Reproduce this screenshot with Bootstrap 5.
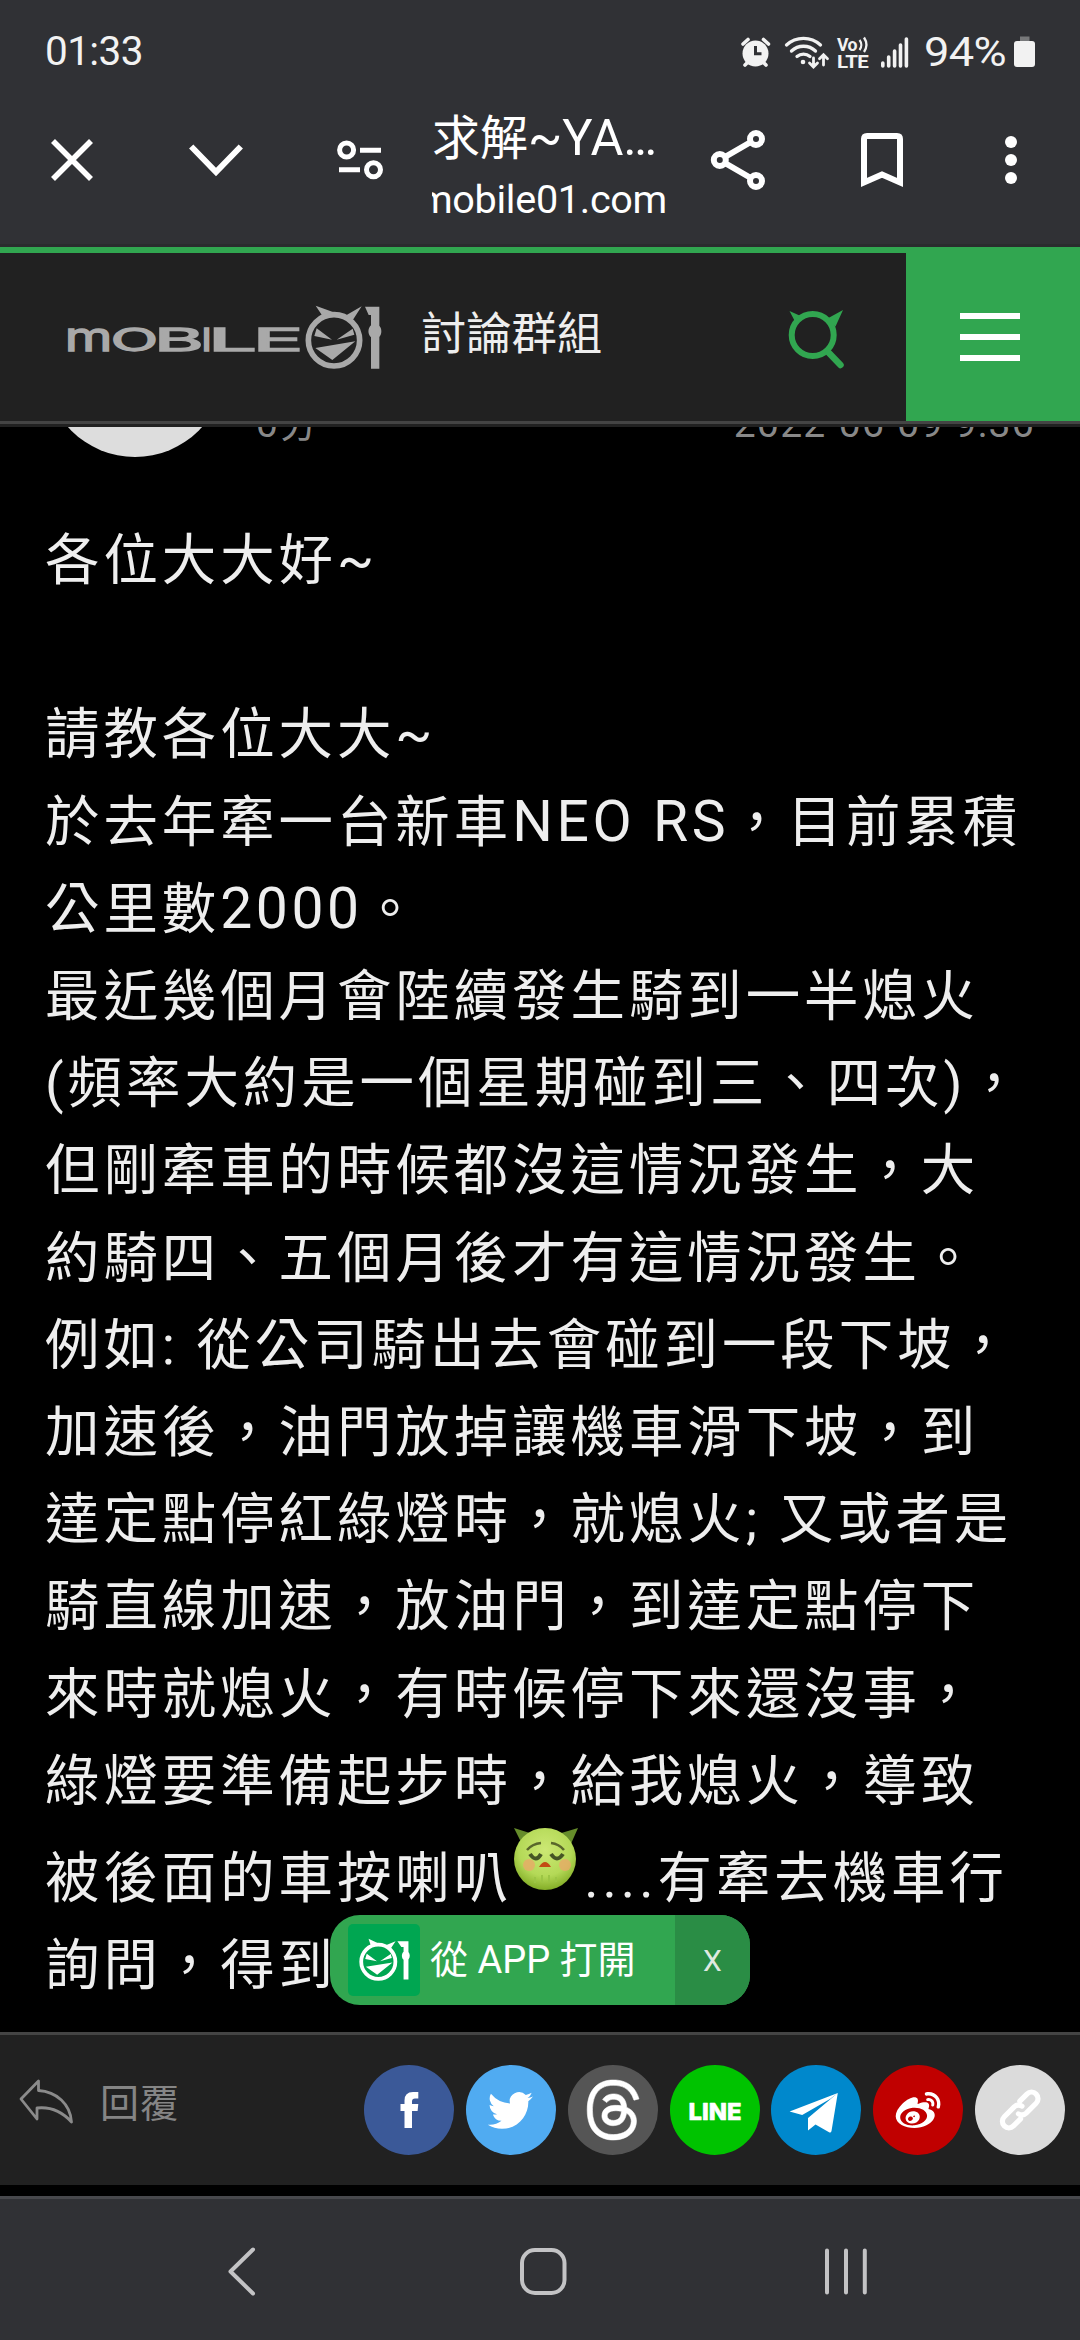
<!DOCTYPE html>
<html lang="zh-Hant">
<head>
<meta charset="utf-8">
<meta name="viewport" content="width=device-width, initial-scale=1">
<title>Mobile01</title>
<link rel="stylesheet" href="https://cdn.jsdelivr.net/npm/bootstrap@5.3.0/dist/css/bootstrap.min.css">
<style>
  body { background:#000; color:#eee; font-family:Roboto,"Noto Sans CJK TC",sans-serif; width:1080px; height:2340px; overflow:hidden; }
  svg { display:block; flex:none; overflow:visible; }
  .browser-top { height:244px; background:#303135; color:#fff; }
  .browser-edge { height:3px; background:#2a2c2e; }
  .status { height:100px; padding:3px 45px 0; color:#f2f2f2; font-size:40.5px; letter-spacing:-.6px; }
  .toolbar-row { height:120px; padding-left:48px; }
  .tab-title { width:234px; margin:16px 0 0 49px; }
  .tab-name { font-size:48px; line-height:62px; }
  .tab-name span { font-size:50.5px; }
  .tab-host { font-size:39.6px; line-height:60px; letter-spacing:-.3px; }
  .tab-host span { margin-right:-1px; }
  .site-head { height:177px; background:#212121; border-top:6px solid #31a650; border-bottom:3px solid #444; }
  .site-edge { height:3px; background:#212121; }
  .wordmark { margin-left:50px; }
  .wordmark .face-ring { fill:none; stroke:#a9a9a9; stroke-width:17; }
  .board { font-size:45.3px; margin-left:31px; margin-top:-4px; }
  .menu-btn { width:174px; background:#31a650; border:0; border-radius:0; }
  .bars { gap:15px; margin-right:6px; }
  .bars i { display:block; width:60px; height:6px; background:#fff; }
  .meta { height:90px; color:#888; font-size:39px; }
  .avatar { width:180px; height:180px; border-radius:50%; background:#ddd; margin:-150px 0 0 45px; flex:none; }
  .meta-txt { line-height:40px; margin-top:-23px; letter-spacing:1.3px; }
  .post { font-size:54.4px; line-height:87.2px; letter-spacing:4px; padding-left:45px; white-space:nowrap; }
  .latin { font-size:57px; letter-spacing:3.6px; line-height:1; }
  .post svg { display:inline-block; vertical-align:baseline; }
  .app-pill { left:330px; top:1915px; width:420px; height:90px; border-radius:30px; background:#31a650; color:#fff; font-size:38px; z-index:3; }
  .app-logo { width:72px; height:72px; border-radius:5px; background:#00a651; margin-left:18px; }
  .pill-x { width:75px; background:#2a8d45; color:#dfe9e1; font-size:30px; }
  .actions { height:153px; background:#212121; border-top:3px solid #444; padding-right:15px; }
  .reply { color:#858585; font-size:39px; letter-spacing:1px; margin-top:-12px; }
  .disc { width:90px; height:90px; border-radius:50%; flex:none; }
  .sys-nav { height:144px; background:#303135; border-top:3px solid #47484c; margin-top:11px; }
</style>
<script src="https://cdn.jsdelivr.net/npm/bootstrap@5.3.0/dist/js/bootstrap.bundle.min.js"></script>
</head>
<body class="d-flex flex-column position-relative m-0">

<header class="browser-top">
  <div class="status d-flex align-items-center">
    <span>01:33</span>
    <svg class="ms-auto" width="294" height="34" viewBox="741 34 294 34" fill="none" stroke="#f2f2f2">
      <g stroke-width="3.6" stroke-linecap="round">
        <circle cx="755.5" cy="52.5" r="13" fill="#f2f2f2" stroke="none"/>
        <path d="M743 43l5-4.5M768.500 43l-5-4.500M748 61l-3 3M763 61l3 3"/>
        <path d="M755.500 45v7.800h6" stroke="#303135" stroke-width="3" stroke-linecap="butt"/>
        <path d="M786.500 44a25 25 0 0 1 34 0M791.500 50a17.500 17.500 0 0 1 24 0M797 55.500a10 10 0 0 1 13 0" stroke-width="3.300"/>
        <circle cx="803" cy="61" r="2.300" fill="#f2f2f2" stroke="none"/>
        <path d="M813.500 57v8.500m-4-3.500l4 4 4-4M823.500 64v-10m-4 3.800l4-4 4 4" stroke-width="2.800"/>
      </g>
      <g stroke="none" fill="#f2f2f2" font-family="Roboto" font-weight="700">
        <text x="837" y="49.500" font-size="18.500" textLength="20" lengthAdjust="spacingAndGlyphs">Vo</text>
        <text x="837" y="66.500" font-size="18.500" textLength="31" lengthAdjust="spacingAndGlyphs">LTE</text>
      </g>
      <path d="M859.500 39a8 8 0 0 1 0 10M864 36.500a13 13 0 0 1 0 14.500" stroke-width="2.300"/>
      <path d="M882.800 62v3M888.700 56v9M894.600 50v15M900.500 44v21M906.400 38v27" stroke-width="3.600" stroke-linecap="round"/>
      <text x="924" y="65.300" font-size="41" font-family="Roboto" fill="#f2f2f2" stroke="none" textLength="82" lengthAdjust="spacingAndGlyphs">94%</text>
      <path d="M1020 35.500h9.500v5h-9.500z" fill="#77787a" stroke="none"/>
      <rect x="1014" y="40" width="21" height="26" rx="3" fill="#f2f2f2" stroke="none"/>
    </svg>
  </div>
  <div class="toolbar-row d-flex align-items-center" aria-label="瀏覽器工具列">
    <svg width="48" height="48" viewBox="48 136 48 48" fill="none" stroke="#fff" stroke-width="5.600"><path d="M53 141l38 38M91 141l-38 38"/></svg>
    <svg style="margin-left:93px" width="54" height="48" viewBox="189 136 54 48" fill="none" stroke="#fff" stroke-width="6"><path d="M191.200 146.500L216 172l24.800-25.500"/></svg>
    <svg style="margin-left:94px" width="46" height="40" viewBox="337 140 46 40" fill="none" stroke="#fff" stroke-width="5"><circle cx="346.600" cy="150" r="7"/><circle cx="373.500" cy="169.700" r="7"/><path d="M360 150.200h21M339 169.700h21"/></svg>
    <div class="tab-title d-flex flex-column overflow-hidden text-nowrap">
      <div class="tab-name">求解<span>~YA…</span></div>
      <div class="tab-host d-flex justify-content-end"><span>mobile01.com</span></div>
    </div>
    <svg style="margin-left:45px" width="54" height="60" viewBox="711 130 54 60" fill="none" stroke="#fff" stroke-width="6"><path d="M756 139l-36.200 21 36.200 21"/><g fill="#303135"><circle cx="756" cy="139" r="6"/><circle cx="719.800" cy="160" r="6"/><circle cx="756" cy="181" r="6"/></g></svg>
    <svg style="margin-left:96px" width="42" height="54" viewBox="861 133 42 54" fill="none" stroke="#fff" stroke-width="6"><path d="M864 182.500V139q0-3 3-3h30q3 0 3 3v43.500l-18-8z"/></svg>
    <svg style="margin-left:102px" width="12" height="48" viewBox="1005 136 12 48" fill="#fff"><circle cx="1011" cy="142" r="6"/><circle cx="1011" cy="160" r="6"/><circle cx="1011" cy="178" r="6"/></svg>
  </div>
</header>
<div class="browser-edge"></div>

<nav class="site-head d-flex align-items-center">
  <svg class="wordmark" width="340" height="90" viewBox="0 -3 1020 270" fill="#a9a9a9">
    <g font-family="Inter" stroke="#a9a9a9" stroke-width="4" font-size="92">
      <text x="44" y="175" font-size="119" textLength="143" lengthAdjust="spacingAndGlyphs">m</text>
      <text x="182" y="175" textLength="142" lengthAdjust="spacingAndGlyphs">O</text>
      <text x="313" y="175" textLength="148" lengthAdjust="spacingAndGlyphs">B</text>
      <text x="454" y="175" textLength="32" lengthAdjust="spacingAndGlyphs">I</text>
      <text x="474" y="175" textLength="147" lengthAdjust="spacingAndGlyphs">L</text>
      <text x="608" y="175" textLength="152" lengthAdjust="spacingAndGlyphs">E</text>
    </g>
    <circle class="face-ring" cx="852" cy="142" r="77"/>
    <path d="M797 38l54 20-32 13zM935 40l-49 28 20 17z"/>
    <path d="M800 106l46 34-53-11zM908 107l-48 33 53-15zM796 165l120-20-69 56z"/>
    <path d="M945 41h43v57c8 9 8 25 0 34v95h-25v-94c-10-9-10-27 0-36V66h-7z"/>
  </svg>
  <div class="board text-nowrap">討論群組</div>
  <svg class="ms-auto" style="margin-right:56px" width="70" height="70" viewBox="0 1 70 70" fill="#31a650"><circle cx="32.700" cy="34" r="21" fill="none" stroke="#31a650" stroke-width="6"/><path d="M9.500 10l10 4.500-4.500 6zM63 9L47.500 17.500l8 8z"/><path d="M49 52l11.500 12" stroke="#31a650" stroke-width="6.500" stroke-linecap="round"/></svg>
  <button class="menu-btn btn p-0 align-self-stretch d-flex align-items-center justify-content-center" aria-label="選單"><span class="bars d-flex flex-column"><i></i><i></i><i></i></span></button>
</nav>
<div class="site-edge"></div>

<main class="flex-grow-1 overflow-hidden">
  <div class="meta d-flex overflow-hidden">
    <div class="avatar"></div>
    <div class="meta-txt" style="margin-left:31px">0分</div>
    <div class="meta-txt ms-auto" style="margin-right:45px">2022-06-09 9:36</div>
  </div>
  <div class="post">各位大大好~<br><br>請教各位大大~<br>於去年牽一台新車<span class="latin">NEO RS</span>，目前累積<br>公里數<span class="latin">2000</span>。<br>最近幾個月會陸續發生騎到一半熄火<br>(頻率大約是一個星期碰到三、四次)，<br>但剛牽車的時候都沒這情況發生，大<br>約騎四、五個月後才有這情況發生。<br>例如: 從公司騎出去會碰到一段下坡，<br>加速後，油門放掉讓機車滑下坡，到<br>達定點停紅綠燈時，就熄火; 又或者是<br>騎直線加速，放油門，到達定點停下<br>來時就熄火，有時候停下來還沒事，<br>綠燈要準備起步時，給我熄火，導致<br>被後面的車按喇叭<svg width="72" height="72" viewBox="0 0 72 72"><defs><radialGradient id="skin" cx=".5" cy=".35" r=".65"><stop offset="0" stop-color="#cce874"/><stop offset=".65" stop-color="#b4d957"/><stop offset="1" stop-color="#83ad27"/></radialGradient></defs><path d="M2 3l22 7-13 11zM66 3L46 9l12 12z" fill="#668d2b"/><circle cx="33" cy="34" r="31" fill="url(#skin)"/><circle cx="17" cy="40" r="6" fill="#e9aa68" opacity=".8"/><circle cx="53" cy="40" r="6" fill="#e9aa68" opacity=".8"/><path d="M15 25q5-6 14-7M52 25q-5-6-13-7" fill="none" stroke="#59672b" stroke-width="2.500"/><path d="M18 29q6 9 11 0M39 29q6 9 12 0" fill="none" stroke="#455525" stroke-width="4"/><path d="M27 42q6-10 12 0z" fill="#c34b13"/><path d="M23 52v6M30 50v7M37 50v7M44 52v5" stroke="#9cc544" stroke-width="2"/></svg>....有牽去機車行<br>詢問，得到</div>
</main>

<div class="app-pill position-absolute d-flex align-items-center overflow-hidden">
  <div class="app-logo d-flex align-items-center justify-content-center">
    <svg width="51" height="44" viewBox="765 38 230 192" fill="#fff"><circle cx="852" cy="142" r="77" fill="none" stroke="#fff" stroke-width="17"/><path d="M808 38l43 20-32 13zM930 50l-44 18 20 17z"/><path d="M800 106l46 34-53-11zM908 107l-48 33 53-15zM796 165l120-20-69 56z"/><path d="M938 50h50v48c8 9 8 25 0 34v90h-22v-89c-10-9-10-27 0-36V75h-10z"/></svg>
  </div>
  <div class="text-nowrap" style="margin-left:10px">從 APP 打開</div>
  <div class="pill-x ms-auto align-self-stretch d-flex align-items-center justify-content-center">X</div>
</div>

<footer>
  <div class="actions d-flex align-items-center">
    <svg style="margin:-16px 0 0 19px" width="55" height="46" viewBox="19 2081 55 46" fill="none" stroke="#8b8b8b" stroke-width="2.800" stroke-linejoin="round"><path d="M21 2101l17.500-18v9.500c18 1 32 14 33 31.500-9-10-21-15.500-34.500-14v11z"/></svg>
    <div class="reply" style="margin-left:26px">回覆</div>
    <div class="d-flex ms-auto" style="gap:11.800px">
      <svg class="disc" viewBox="0 0 90 90" style="background:#3b5998" fill="#fff"><path d="M40.500 63V46h-4v-7h4v-3.500q0-8.500 8.500-8.500h5.300v6.600H51q-3 0-3 3V39h6.300l-.7 7H48v17z"/></svg>
      <svg class="disc" viewBox="0 0 90 90" style="background:#50abf1" fill="#fff"><path transform="translate(21.800 21.500) scale(2.820)" d="M5.026 15c6.038 0 9.341-5.003 9.341-9.334q.002-.211-.006-.422A6.700 6.700 0 0 0 16 3.542a6.700 6.700 0 0 1-1.889.518 3.300 3.300 0 0 0 1.447-1.817 6.500 6.500 0 0 1-2.087.793A3.286 3.286 0 0 0 7.875 6.030a9.320 9.320 0 0 1-6.767-3.429 3.290 3.290 0 0 0 1.018 4.382A3.300 3.300 0 0 1 .64 6.575v.045a3.290 3.290 0 0 0 2.632 3.218 3.200 3.200 0 0 1-.865.115 3 3 0 0 1-.614-.057 3.280 3.280 0 0 0 3.067 2.277A6.600 6.600 0 0 1 .78 13.580a6 6 0 0 1-.78-.045A9.340 9.340 0 0 0 5.026 15"/></svg>
      <svg class="disc" viewBox="0 0 90 90" style="background:#555" fill="#fff"><path transform="translate(15.500 15) scale(3.700 3.750)" stroke="#fff" stroke-width=".15" d="M6.321 6.016c-.27-.18-1.166-.802-1.166-.802.756-1.081 1.753-1.502 3.132-1.502.975 0 1.803.327 2.394.948s.928 1.509 1.005 2.644q.492.207.905.484c1.109.745 1.719 1.860 1.719 3.137 0 2.716-2.226 5.075-6.256 5.075C4.594 16 1 13.987 1 7.994 1 2.034 4.482 0 8.044 0 9.690 0 13.550.243 15 5.036l-1.360.353C12.516 1.974 10.163 1.430 8.006 1.430c-3.565 0-5.582 2.171-5.582 6.790 0 4.143 2.254 6.343 5.630 6.343 2.777 0 4.847-1.443 4.847-3.556 0-1.438-1.208-2.127-1.270-2.127-.236 1.234-.868 3.310-3.644 3.310-1.618 0-3.013-1.118-3.013-2.582 0-2.090 1.984-2.847 3.550-2.847.586 0 1.294.04 1.663.114 0-.637-.54-1.728-1.900-1.728-1.250 0-1.566.405-1.967.868ZM8.716 8.190c-2.040 0-2.304.87-2.304 1.416 0 .878 1.043 1.168 1.600 1.168 1.020 0 2.067-.282 2.232-2.423a6.200 6.200 0 0 0-1.528-.161"/></svg>
      <svg class="disc" viewBox="0 0 90 90" style="background:#00c300" fill="#fff"><text x="18.500" y="54.500" font-family="Inter" font-weight="800" font-size="23" textLength="53" lengthAdjust="spacingAndGlyphs" stroke="#fff" stroke-width=".6" stroke-linejoin="round">LINE</text></svg>
      <svg class="disc" viewBox="0 0 90 90" style="background:#0088cc" fill="#fff"><path d="M66.800 28L18.600 46.500l12.600 3.600L59 34zM66.800 28L37 53v12.500l7.500-6L58.500 67.500q1.500.5 2-1.500z"/></svg>
      <svg class="disc" viewBox="0 0 90 90" style="background:#c00000" fill="#fff"><path transform="translate(22.700 24.300) scale(.0875 .0865)" d="M407 177.600c7.600-24-13.400-46.800-37.400-41.700-22 4.800-28.800-28.100-7.100-32.800 50.100-10.900 92.300 37.100 76.500 84.800-6.800 21.200-38.800 10.800-32-10.300zM214.800 446.700C108.500 446.700 0 395.300 0 310.400c0-44.300 28-95.400 76.300-143.700C176 67 279.500 65.800 249.900 161c-4 13.100 12.300 5.700 12.300 6 79.500-33.600 140.500-16.800 114 51.400-3.700 9.400 1.100 10.900 8.300 13.100 135.700 42.300 34.800 215.200-169.700 215.200zm143.700-146.300c-5.400-55.700-78.500-94-163.400-85.700-84.800 8.600-148.800 60.300-143.400 116s78.500 94 163.400 85.700c84.800-8.600 148.800-60.300 143.400-116zM347.900 35.100c-25.900 5.600-16.800 43.700 8.300 38.300 72.300-15.200 134.800 52.800 111.700 124-7.400 24.200 29.100 37 37.400 12 31.900-99.800-55.100-195.900-157.400-174.300zm-78.500 311c-17.100 38.800-66.800 60-109.100 46.300-40.800-13.100-58-53.400-40.300-89.700 17.700-35.400 63.100-55.400 103.400-45.100 42 10.800 63.100 50.200 46 88.500zm-86.300-30c-12.900-5.400-30 .3-38 12.900-8.300 12.900-4.300 28 8.600 34 13.100 6 30.800.3 39.100-12.900 8-13.100 3.700-28.300-9.700-34zm32.600-13.400c-5.100-1.700-11.400.6-14.300 5.400-2.900 5.100-1.400 10.600 3.700 12.900 5.100 2 11.700-.3 14.600-5.400 2.800-5.200 1.100-10.900-4-12.900z"/></svg>
      <svg class="disc" viewBox="0 0 90 90" style="background:#dbdbdb" fill="none" stroke="#fff" stroke-width="5.200" stroke-linecap="round"><g transform="translate(45.200 45) rotate(-45)"><path d="M6-6.500H16a6.500 6.500 0 0 1 0 13H2a6.500 6.500 0 0 1-6-5"/><path d="M-6 6.500H-16a6.500 6.500 0 0 1 0-13H-2a6.500 6.500 0 0 1 6 5"/></g></svg>
    </div>
  </div>
  <div class="sys-nav d-flex align-items-center">
    <svg width="1080" height="60" viewBox="0 2239.500 1080 60" fill="none" stroke="#c3c3c5" stroke-width="4" stroke-linecap="round"><path d="M253 2249l-22.500 22 22.500 22" stroke-linejoin="round"/><rect x="522" y="2249.500" width="42.500" height="43" rx="13"/><path d="M827 2250v42M846 2250v42M864.800 2250v42"/></svg>
  </div>
</footer>
</body>
</html>
